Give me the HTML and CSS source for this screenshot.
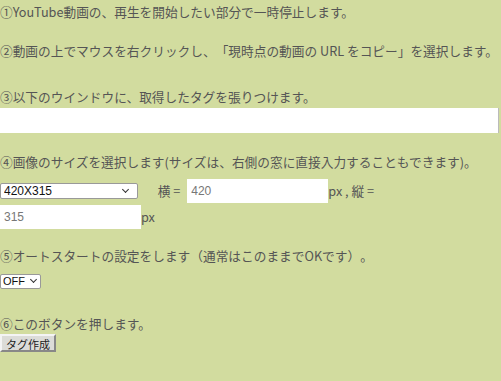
FILE: index.html
```html
<html>
<head>
    <meta charset="utf-8">
    <link rel="stylesheet" href="styles.css">
</head>
<body>
    <form class="maker">
        <p class="step first">①YouTube動画の、再生を開始したい部分で一時停止します。</p>
        <p class="step">②動画の上でマウスを右クリックし、「現時点の動画の URL をコピー」を選択します。</p>
        <p class="step third">③以下のウインドウに、取得したタグを張りつけます。</p>
        <input type="text" class="tag" id="tag">

        <p class="step">④画像のサイズを選択します(サイズは、右側の窓に直接入力することもできます)。</p>
        <div class="size">
            <span class="selbox sizebox">
                <select id="size" class="sel">
                    <option value="420">420X315</option>
                    <option value="480">480X360</option>
                    <option value="640">640X480</option>
                </select>
            </span>
            <span class="lbl yoko">横 =</span>
            <input type="text" class="num" id="w" value="420"><span class="lbl">px , 縦 =</span>
            <input type="text" class="num" id="h" value="315"><span class="lbl">px</span>
        </div>

        <p class="step fifth">⑤オートスタートの設定をします（通常はこのままでOKです）。</p>
        <div class="autorow">
            <span class="selbox autobox">
                <select id="auto" class="sel">
                    <option value="0">OFF</option>
                    <option value="1">ON</option>
                </select>
            </span>
        </div>

        <p class="step sixth">⑥このボタンを押します。</p>
        <button type="button" class="make">タグ作成</button>
    </form>
</body>
</html>
```

FILE: styles.css
```css
body{
    margin: 0;
    background-color: #d2dc9f;
    color: #555;
    font-family: "Noto Sans CJK JP", "Noto Sans", sans-serif;
    font-size: 12.7px;
    text-spacing-trim: space-all;
}
.step{
    margin: 19px 0 0 0;
    line-height: 20px;
    white-space: nowrap;
}
.first{
    margin-top: 2px;
}
.third{
    margin-top: 26px;
    margin-bottom: 1px;
}
.tag{
    display: block;
    box-sizing: border-box;
    width: 499px;
    height: 25px;
    margin: 0;
    border: none;
    border-right: 1px solid #bbb;
    background: #fff;
}
.size{
    margin-top: 4px;
    line-height: 26px;
    width: 480px;
}
/* select with its own small chevron */
.selbox{
    position: relative;
    display: inline-block;
    vertical-align: middle;
    line-height: 0;
}
.selbox::after{
    content: "";
    position: absolute;
    top: 4px;
    width: 4px;
    height: 4px;
    border-right: 1.5px solid #333;
    border-bottom: 1.5px solid #333;
    transform: rotate(45deg);
    pointer-events: none;
}
.sel{
    -webkit-appearance: none;
    appearance: none;
    box-sizing: border-box;
    height: 16px;
    margin: 0;
    padding: 0 0 0 3px;
    font-family: "Liberation Sans", sans-serif;
    font-size: 12px;
    font-weight: normal;
    color: #111;
    border: 1px solid #999;
    border-radius: 2px;
    background: #fff;
}
.sizebox .sel{
    width: 138px;
}
.sizebox::after{
    right: 10px;
}
.autobox .sel{
    width: 41px;
    height: 15px;
    padding-left: 2px;
    font-size: 11px;
}
.autobox::after{
    top: 3px;
    right: 5px;
}
.lbl{
    vertical-align: middle;
}
.yoko{
    margin-left: 17px;
}
.num{
    box-sizing: border-box;
    width: 141px;
    height: 24px;
    margin: 0 0 0 4px;
    padding: 0 4px;
    border: none;
    background: #fff;
    color: #777;
    font-family: "Liberation Sans", sans-serif;
    font-size: 12px;
    vertical-align: middle;
}
#h{
    margin-left: 0;
}
.fifth{
    margin-top: 16px;
}
.autorow{
    margin-top: 8px;
    line-height: 0;
}
.sixth{
    margin-top: 25px;
}
.make{
    display: block;
    width: 56px;
    height: 18px;
    margin: 0;
    padding: 0;
    font-family: "Noto Sans CJK JP", sans-serif;
    font-size: 11px;
    color: #222;
    background-color: #dcdcd8;
    border: 2px solid #f4f4f4;
    border-right-color: #888;
    border-bottom-color: #888;
    cursor: pointer;
}
```
